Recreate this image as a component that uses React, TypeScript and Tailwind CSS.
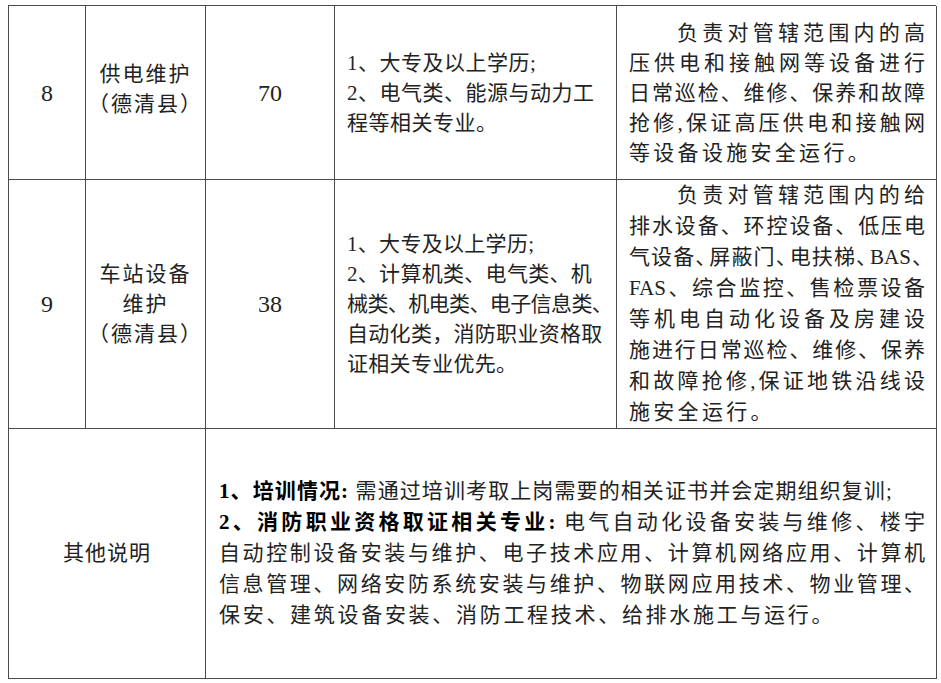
const font = "font-['Liberation_Serif','Noto_Sans_CJK_SC',serif]";

type Line = { text: React.ReactNode; indent?: boolean; fill?: boolean };

function Lines({
  lines,
  className = "",
  fillWidth = "",
  lastClass = "",
}: {
  lines: Line[];
  className?: string;
  fillWidth?: string;
  lastClass?: string;
}) {
  return (
    <div className={className}>
      {lines.map((line, i) => (
        <div
          key={i}
          className={`whitespace-nowrap ${line.indent ? "pl-[48px]" : ""} ${
            line.fill ? `${fillWidth} text-justify [text-align-last:justify]` : lastClass
          }`}
        >
          {line.text}
        </div>
      ))}
    </div>
  );
}

// narrow enumeration comma, as the printed table squeezes it
function Dun() {
  return <span className="tracking-[-8px]">、</span>;
}

const cell = "border-r border-b border-[#4a4a4a] flex items-center";

export default function App() {
  return (
    <div className={`min-h-screen bg-white text-[#222] ${font}`}>
      <div className="pt-[5px] pl-[8px]">
        <div className="grid w-[928px] grid-cols-[77px_120px_129px_282px_320px] grid-rows-[174px_249px_250px] border-l border-t border-[#4a4a4a]">
          {/* row 8 */}
          <div className={`${cell} justify-center text-[24px]`}>8</div>
          <div className={`${cell} justify-center pb-[8px]`}>
            <Lines
              className="text-center text-[21px] leading-[30px] tracking-[2px]"
              lines={[{ text: "供电维护" }, { text: "（德清县）" }]}
            />
          </div>
          <div className={`${cell} justify-center text-[24px]`}>70</div>
          <div className={`${cell} pl-[12px]`}>
            <Lines
              className="text-[21px] leading-[30px] tracking-[0.5px]"
              lines={[
                { text: "1、大专及以上学历;" },
                { text: "2、电气类、能源与动力工" },
                { text: "程等相关专业。" },
              ]}
            />
          </div>
          <div className={`${cell} pl-[12px]`}>
            <Lines
              className="text-[21px] leading-[30px]"
              fillWidth="w-[296px]"
              lastClass="tracking-[3.3px]"
              lines={[
                { text: "负责对管辖范围内的高", indent: true, fill: true },
                { text: "压供电和接触网等设备进行", fill: true },
                { text: "日常巡检、维修、保养和故障", fill: true },
                { text: "抢修,保证高压供电和接触网", fill: true },
                { text: "等设备设施安全运行。" },
              ]}
            />
          </div>

          {/* row 9 */}
          <div className={`${cell} justify-center text-[24px]`}>9</div>
          <div className={`${cell} justify-center`}>
            <Lines
              className="text-center text-[21px] leading-[30px] tracking-[2px]"
              lines={[{ text: "车站设备" }, { text: "维护" }, { text: "（德清县）" }]}
            />
          </div>
          <div className={`${cell} justify-center text-[24px]`}>38</div>
          <div className={`${cell} pl-[12px]`}>
            <Lines
              className="text-[21px] leading-[30px] tracking-[0.3px]"
              lines={[
                { text: "1、大专及以上学历;" },
                { text: "2、计算机类、电气类、机" },
                { text: <span className="tracking-[-0.6px]">械类、机电类、电子信息类、</span> },
                { text: "自动化类，消防职业资格取" },
                { text: "证相关专业优先。" },
              ]}
            />
          </div>
          <div className={`${cell} pl-[12px]`}>
            <Lines
              className="text-[21px] leading-[31px]"
              fillWidth="w-[296px]"
              lastClass="tracking-[3.3px]"
              lines={[
                { text: "负责对管辖范围内的给", indent: true, fill: true },
                { text: "排水设备、环控设备、低压电", fill: true },
                {
                  text: (
                    <>
                      气设备<Dun />屏蔽门<Dun />电扶梯<Dun />BAS<Dun />
                    </>
                  ),
                  fill: true,
                },
                { text: "FAS、综合监控、售检票设备", fill: true },
                { text: "等机电自动化设备及房建设", fill: true },
                { text: "施进行日常巡检、维修、保养", fill: true },
                { text: "和故障抢修,保证地铁沿线设", fill: true },
                { text: "施安全运行。" },
              ]}
            />
          </div>

          {/* 其他说明 */}
          <div className={`${cell} col-span-2 justify-center text-[21px] tracking-[1px]`}>
            其他说明
          </div>
          <div className={`${cell} col-span-3 pl-[13px]`}>
            <Lines
              className="text-[21px] leading-[31px]"
              fillWidth="w-[706px]"
              lines={[
                {
                  text: (
                    <span className="tracking-[1.1px]">
                      <b className="font-bold text-black">1、培训情况:</b> 需通过培训考取上岗需要的相关证书并会定期组织复训;
                    </span>
                  ),
                },
                {
                  text: (
                    <>
                      <b className="font-bold text-black">2、消防职业资格取证相关专业:</b> 电气自动化设备安装与维修、楼宇
                    </>
                  ),
                  fill: true,
                },
                { text: "自动控制设备安装与维护、电子技术应用、计算机网络应用、计算机", fill: true },
                { text: "信息管理、网络安防系统安装与维护、物联网应用技术、物业管理、", fill: true },
                { text: <span className="tracking-[2.7px]">保安、建筑设备安装、消防工程技术、给排水施工与运行。</span> },
              ]}
            />
          </div>
        </div>
      </div>
    </div>
  );
}
